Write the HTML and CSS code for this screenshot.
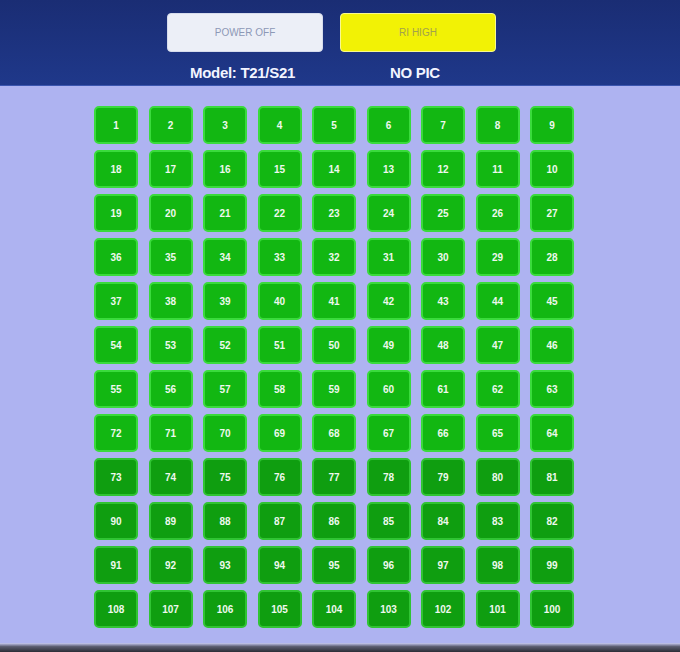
FILE: index.html
```html
<!DOCTYPE html>
<html lang="en">
<head>
    <meta charset="UTF-8">
    <meta name="viewport" content="width=device-width, initial-scale=1.0">
    <title>Panel Test</title>
    <link rel="stylesheet" href="styles.css">
</head>
<body>

    <!-- Barra superior con botones de estado -->
    <div class="header">
        <div class="btn-row">
            <button class="btn btn-power">POWER OFF</button>
            <button class="btn btn-ri">RI HIGH</button>
        </div>
        <div class="info-row">
            <span class="info model">Model: T21/S21</span>
            <span class="info pic">NO PIC</span>
        </div>
    </div>

    <!-- Rejilla de posiciones (orden en serpentina) -->
    <div class="grid">
        <div class="cell">1</div><div class="cell">2</div><div class="cell">3</div><div class="cell">4</div><div class="cell">5</div><div class="cell">6</div><div class="cell">7</div><div class="cell">8</div><div class="cell">9</div>
        <div class="cell">18</div><div class="cell">17</div><div class="cell">16</div><div class="cell">15</div><div class="cell">14</div><div class="cell">13</div><div class="cell">12</div><div class="cell">11</div><div class="cell">10</div>
        <div class="cell">19</div><div class="cell">20</div><div class="cell">21</div><div class="cell">22</div><div class="cell">23</div><div class="cell">24</div><div class="cell">25</div><div class="cell">26</div><div class="cell">27</div>
        <div class="cell">36</div><div class="cell">35</div><div class="cell">34</div><div class="cell">33</div><div class="cell">32</div><div class="cell">31</div><div class="cell">30</div><div class="cell">29</div><div class="cell">28</div>
        <div class="cell">37</div><div class="cell">38</div><div class="cell">39</div><div class="cell">40</div><div class="cell">41</div><div class="cell">42</div><div class="cell">43</div><div class="cell">44</div><div class="cell">45</div>
        <div class="cell">54</div><div class="cell">53</div><div class="cell">52</div><div class="cell">51</div><div class="cell">50</div><div class="cell">49</div><div class="cell">48</div><div class="cell">47</div><div class="cell">46</div>
        <div class="cell">55</div><div class="cell">56</div><div class="cell">57</div><div class="cell">58</div><div class="cell">59</div><div class="cell">60</div><div class="cell">61</div><div class="cell">62</div><div class="cell">63</div>
        <div class="cell">72</div><div class="cell">71</div><div class="cell">70</div><div class="cell">69</div><div class="cell">68</div><div class="cell">67</div><div class="cell">66</div><div class="cell">65</div><div class="cell">64</div>
        <div class="cell dark">73</div><div class="cell dark">74</div><div class="cell dark">75</div><div class="cell dark">76</div><div class="cell dark">77</div><div class="cell dark">78</div><div class="cell dark">79</div><div class="cell dark">80</div><div class="cell dark">81</div>
        <div class="cell dark">90</div><div class="cell dark">89</div><div class="cell dark">88</div><div class="cell dark">87</div><div class="cell dark">86</div><div class="cell dark">85</div><div class="cell dark">84</div><div class="cell dark">83</div><div class="cell dark">82</div>
        <div class="cell dark">91</div><div class="cell dark">92</div><div class="cell dark">93</div><div class="cell dark">94</div><div class="cell dark">95</div><div class="cell dark">96</div><div class="cell dark">97</div><div class="cell dark">98</div><div class="cell dark">99</div>
        <div class="cell dark">108</div><div class="cell dark">107</div><div class="cell dark">106</div><div class="cell dark">105</div><div class="cell dark">104</div><div class="cell dark">103</div><div class="cell dark">102</div><div class="cell dark">101</div><div class="cell dark">100</div>
    </div>

    <div class="footer"></div>

</body>
</html>
```

FILE: styles.css
```css
body {
    font-family: 'Liberation Sans', Arial, sans-serif;
    background: #aeb3f1;
    margin: 0;
    padding: 0;
    height: 652px;
    display: flex;
    flex-direction: column;
}

/* Cabecera azul */
.header {
    background: linear-gradient(180deg, #1a2d74, #1f388a);
    height: 86px;
    box-sizing: border-box;
    padding-top: 13px;
    border-bottom: 1px solid #3b56b0;
}

.btn-row {
    display: flex;
    justify-content: center;
    gap: 17px;
    padding-right: 17px;
}

.btn {
    width: 156px;
    height: 39px;
    border-radius: 4px;
    font-family: inherit;
    font-size: 10px;
    border: 1px solid transparent;
}

.btn-power {
    background: #eceff7;
    color: #8c98b6;
    border-color: #d6dcec;
}

.btn-ri {
    background: #f2f205;
    color: #a2a24c;
    border-color: #f8f890;
}

.info-row {
    display: flex;
    margin-top: 12px;
    padding-left: 190px;
}

.info {
    color: #f2f4ff;
    font-weight: bold;
    font-size: 15px;
    letter-spacing: -0.3px;
}

.model {
    margin-right: 95px;
}

/* Rejilla de posiciones */
.grid {
    display: grid;
    grid-template-columns: repeat(9, 44px);
    grid-auto-rows: 38px;
    column-gap: 10.5px;
    row-gap: 6px;
    margin: 20px 0 0 94px;
}

.cell {
    background: #12b712;
    border: 2px solid #3adb3c;
    border-radius: 5px;
    color: #eef8ee;
    font-weight: bold;
    font-size: 10px;
    display: flex;
    justify-content: center;
    align-items: center;
}

.cell.dark {
    background: #0f9e10;
    border-color: #30c433;
}

.footer {
    margin-top: auto;
    height: 9px;
    background: linear-gradient(180deg, #c8cbf4, #5a5c70 40%, #2c2d36);
}
```
